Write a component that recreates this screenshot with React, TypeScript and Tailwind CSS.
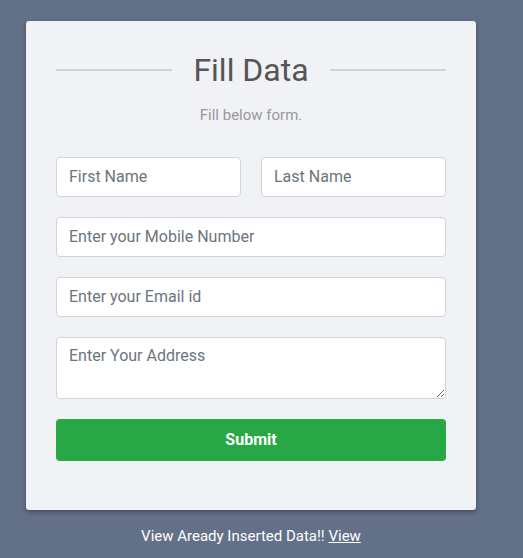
export default function App() {
  return (
    <div
      className="min-h-[558px] w-full bg-[#627088] pt-[21px]"
      style={{ fontFamily: 'Roboto, "Liberation Sans", sans-serif' }}
    >
      <div className="ml-[26px] w-[450px]">
        {/* Card */}
        <div className="rounded-[3px] bg-[#f1f2f6] px-[30px] pb-[49px] pt-[30px] shadow-[0_2px_4px_rgba(0,0,0,0.35)]">
          <div className="flex items-center">
            <div className="h-[2px] flex-1 bg-[#d2d3d5]" />
            <h2 className="px-[21px] text-[32px] leading-[38px] font-normal text-[#555]">Fill Data</h2>
            <div className="h-[2px] flex-1 bg-[#d2d3d5]" />
          </div>
          <p className="mt-[14px] text-center text-[15px] leading-[24px] text-[#999]">Fill below form.</p>

          <form className="mt-[30px] flex flex-col gap-5" onSubmit={(e) => e.preventDefault()}>
            <div className="flex gap-5">
              <input
                className="h-10 w-full min-w-0 flex-1 rounded border border-[#ced4da] bg-white px-3 pb-[2px] text-base text-[#495057] placeholder:text-[#6c757d] outline-none"
                placeholder="First Name"
              />
              <input
                className="h-10 w-full min-w-0 flex-1 rounded border border-[#ced4da] bg-white px-3 pb-[2px] text-base text-[#495057] placeholder:text-[#6c757d] outline-none"
                placeholder="Last Name"
              />
            </div>
            <input
              className="h-10 w-full rounded border border-[#ced4da] bg-white px-3 pb-[2px] text-base text-[#495057] placeholder:text-[#6c757d] outline-none"
              placeholder="Enter your Mobile Number"
            />
            <input
              className="h-10 w-full rounded border border-[#ced4da] bg-white px-3 pb-[2px] text-base text-[#495057] placeholder:text-[#6c757d] outline-none"
              placeholder="Enter your Email id"
            />
            <textarea
              className="block h-[62px] w-full rounded border border-[#ced4da] bg-white px-3 py-[6px] text-base leading-6 text-[#495057] placeholder:text-[#6c757d] outline-none"
              placeholder="Enter Your Address"
            />
            <button
              type="submit"
              className="h-[42px] w-full rounded bg-[#28a745] text-base font-bold text-white"
            >
              Submit
            </button>
          </form>
        </div>

        <p className="mt-[16px] text-center text-[15px] leading-5 text-white">
          View Aready Inserted Data!! <a href="#" className="underline">View</a>
        </p>
      </div>
    </div>
  )
}
